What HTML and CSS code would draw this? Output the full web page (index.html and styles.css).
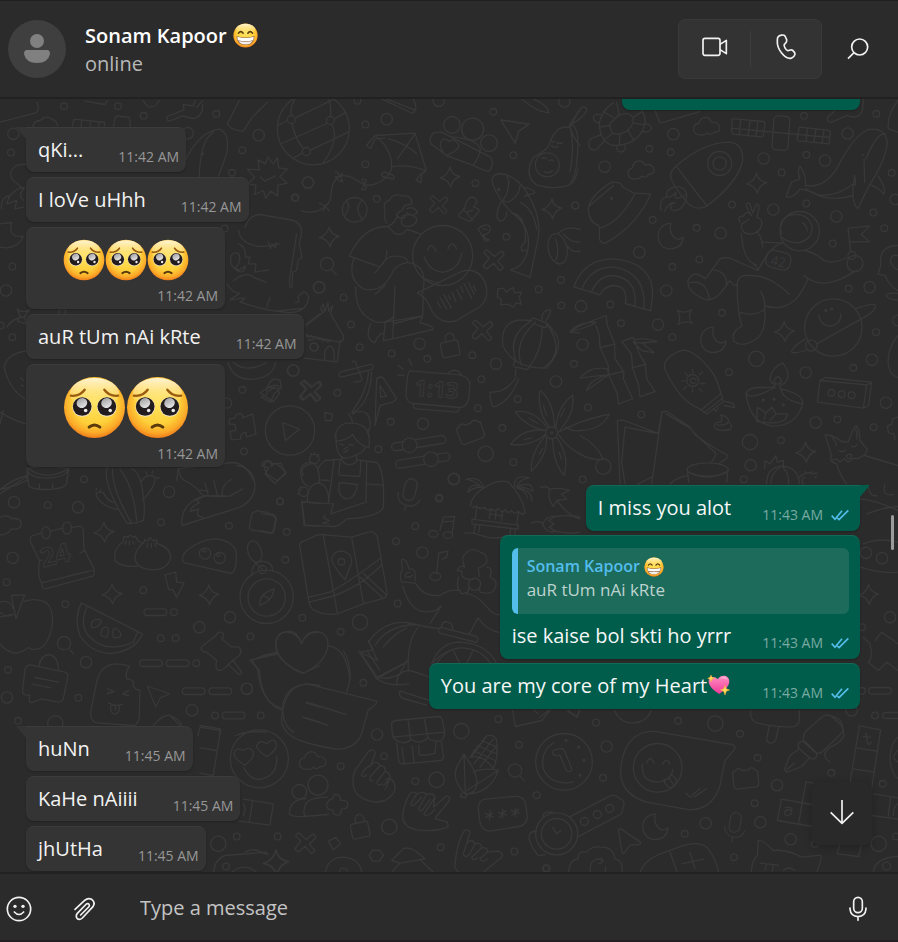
FILE: index.html
```html
<!DOCTYPE html>
<html lang="en">
<head>
<meta charset="utf-8">
<meta name="viewport" content="width=device-width, initial-scale=1">
<title>Sonam Kapoor</title>
<link rel="stylesheet" href="styles.css">
</head>
<body>
<svg class="defs" aria-hidden="true">
  <defs>
    <radialGradient id="face" cx=".5" cy=".42" r=".58">
      <stop offset="0" stop-color="#ffe35e"/><stop offset=".62" stop-color="#fdd03a"/><stop offset=".86" stop-color="#fba928"/><stop offset="1" stop-color="#ee7d1c"/>
    </radialGradient>
    <linearGradient id="shine" x1="0" y1="0" x2="0" y2="1">
      <stop offset="0" stop-color="#fff6dc" stop-opacity=".95"/><stop offset="1" stop-color="#ffe680" stop-opacity="0"/>
    </linearGradient>
    <linearGradient id="glint" x1="0" y1="0" x2="0" y2="1">
      <stop offset="0" stop-color="#a5a4a8"/><stop offset="1" stop-color="#e4e4e4"/>
    </linearGradient>
    <linearGradient id="pink" x1="0" y1="0" x2="0" y2="1">
      <stop offset="0" stop-color="#ff8fc0"/><stop offset="1" stop-color="#f0389a"/>
    </linearGradient>
    <symbol id="pleading" viewBox="0 0 64 64">
      <circle cx="32" cy="32" r="31" fill="url(#face)"/>
      <ellipse cx="32" cy="18" rx="25" ry="16" fill="url(#shine)"/>
      <path d="M8 20q9 1 14-6M42 14q5 7 14 6" fill="none" stroke="#9a5a10" stroke-width="2.4" stroke-linecap="round"/>
      <circle cx="19.500" cy="31.500" r="10" fill="#f3e6d0"/><circle cx="44.500" cy="31.500" r="10" fill="#f3e6d0"/>
      <circle cx="19.500" cy="31" r="9.500" fill="#231c1e"/><circle cx="44.500" cy="31" r="9.500" fill="#231c1e"/>
      <ellipse cx="19" cy="27.500" rx="5.500" ry="5" fill="url(#glint)" transform="rotate(-25 19 27)"/>
      <ellipse cx="44" cy="27.500" rx="5.500" ry="5" fill="url(#glint)" transform="rotate(-25 44 27)"/>
      <circle cx="23" cy="35" r="1.800" fill="#eee"/><circle cx="48" cy="35" r="1.800" fill="#eee"/>
      <path d="M26.500 52q5.500-4.500 11 0" fill="none" stroke="#5b3a0c" stroke-width="3" stroke-linecap="round"/>
    </symbol>
    <symbol id="grin" viewBox="0 0 64 64">
      <circle cx="32" cy="32" r="31" fill="url(#face)"/>
      <ellipse cx="32" cy="16" rx="25" ry="14" fill="url(#shine)"/>
      <path d="M14 26q6-8 12 0M38 26q6-8 12 0" fill="none" stroke="#5b3a10" stroke-width="4" stroke-linecap="round"/>
      <path d="M9 33q23 8 46 0q0 23-23 23t-23-23z" fill="#8c5a35"/>
      <path d="M11 35q21 7 42 0l-1 9q-20 5-40 0z" fill="#fff"/>
      <path d="M14 46q18 4 36 0q-5 9-18 9t-18-9z" fill="#f2efee"/>
    </symbol>
    <symbol id="heart" viewBox="0 0 72 66">
      <path d="M37 60C22 51 4 37 5 20C6 8 23 4 32 16C42-1 67 4 67 22C67 39 49 52 37 60z" fill="url(#pink)"/>
      <path d="M38 14q9-9 19-4q4 3 5 8q-10-8-24-4z" fill="#ffb7d5" opacity=".8"/>
      <path d="M12 3l3 7 7 3-7 3-3 8-3-8-7-3 7-3zM54 34l4 10 10 4-10 4-4 11-4-11-10-4 10-4z" fill="#ffdc5a" stroke="#f5a33b" stroke-width="1.500"/>
    </symbol>
    <symbol id="ticks" viewBox="0 0 54 36">
      <path d="M2 20l10 11L33 5M19 27l5 5L52 4M24 32l9-9" fill="none" stroke="#53bdeb" stroke-width="5"/>
    </symbol>
    <g id="star"><path d="M0-30Q4-6 30-2Q8 5 2 30Q-5 7-30 2Q-7-4 0-30z"/></g>
    <g id="cross"><path d="M-20-31Q-26-30-29-22L-13-6L-31 16Q-29 24-20 26L-1 9L18 31Q27 29 28 21L12 3L31-16Q31-25 22-27L3-11z"/></g>
    <g id="cloud"><path d="M-38 16Q-44-6-24-8Q-18-28-2-26Q10-26 14-12Q36-14 40 6Q38 20 22 18Q12 30 2 20Q-6 28-16 26Q-30 28-38 16z"/></g>
    <g id="moon"><path d="M0-38Q-8-4 18 10Q28 12 38 4Q34 38 0 39Q-34 38-38 2Q-36-34 0-38z"/></g>
    <g id="brick"><path d="M-38-12Q-39-22-30-23L-27-27Q-22-32-14-28L-10-24L8-26Q14-34 24-31L28-25Q36-26 37-18L40 14Q40 24 32 25L-24 32Q-33 32-34 24z"/></g>
    <g id="mic-doodle"><rect x="-18" y="-42" width="36" height="66" rx="18"/><path d="M-32 8Q-30 38 0 40Q30 40 36 14M0 40L-1 56"/></g>
    <g id="glass"><circle r="20"/><path d="M13 15L28 31"/></g>
    <g id="dart"><path d="M-30-30L36 12L2 18L-20 44z"/></g>
    <g id="dash"><rect x="-34" y="-10" width="68" height="20" rx="10"/></g>
    <g id="lock"><path d="M-26-14L18-24Q22-24 23-20L30 16Q30 20 26 21L-16 30Q-21 30-22 26L-29-8Q-30-13-26-14zM-12-18Q-20-40-4-44Q12-46 13-24"/></g>
  </defs>
</svg>

<header class="topbar">
  <svg class="avatar" viewBox="0 0 58 58" role="img" aria-label="Profile photo"><circle cx="29" cy="29" r="29" fill="#3f3f3f"/><circle cx="29" cy="21" r="7" fill="#808080"/><path d="M19 30h20q3 0 3 4q-2 9-13 9t-13-9q0-4 3-4z" fill="#808080"/></svg>
  <div class="contact">
    <h1 class="contact-name">Sonam Kapoor <svg class="name-emoji" role="img" aria-label="😁"><use href="#grin"/></svg></h1>
    <p class="contact-status">online</p>
  </div>
  <div class="calls">
    <button class="call" type="button" aria-label="Video call"><svg class="icon" width="28" height="28" viewBox="0 0 84 84"><rect x="6" y="16" width="51" height="51" rx="6"/><path d="M57 34L76 22V62L57 50"/></svg></button>
    <button class="call" type="button" aria-label="Voice call"><svg class="icon" width="28" height="28" viewBox="511 100 84 84"><path d="M529 112C533 106 546 104 550 109L555 120C557 127 553 129 548 134C545 138 553 152 558 153C563 154 566 148 573 152L579 159C582 165 577 173 567 176C550 178 525 150 527 122C527 117 527 115 529 112z"/></svg></button>
  </div>
  <button class="bare" type="button" aria-label="Search"><svg class="icon" width="28" height="28" viewBox="733 106 84 84"><circle cx="780" cy="142" r="24"/><path d="M763 159L745 177"/></svg></button>
</header>

<main class="chat">
  <svg class="wallpaper" viewBox="0 98 898 774" preserveAspectRatio="xMidYMid slice" aria-hidden="true">
    <!-- ball, kite, hug, lantern -->
    <g transform="translate(260 95) scale(.33333)">
      <circle cx="160" cy="100" r="108"/><circle cx="94" cy="72" r="12"/><circle cx="211" cy="75" r="12"/><circle cx="139" cy="168" r="12"/>
      <path d="M94 60Q90 35 105 10M106 67L220 12M211 63Q215 40 207 12M223 70L255 52M65 144L200 84M82 75L56 88M96 84Q105 130 131 160M215 87Q240 130 190 202M151 164L265 110M128 172L100 188"/>
      <path d="M345 120L465 113L498 222L486 235L482 262L468 254L480 238L498 226Q445 205 395 214Q396 160 345 120L319 150L332 159L345 130L374 128M465 115L412 190M386 130Q440 145 470 175M395 214Q395 230 381 242Q350 275 312 268Q260 230 236 244Q214 260 213 300Q210 325 192 336Q160 358 124 346"/>
      <path d="M374 229q-14 4-6 14q14 4 32 8q6-10-6-14q-12-2-20-8zM305 252q14-4 14 6q-8 12-14 24q12 4 14-6q-6-12-14-24zM226 228q12 4 22 30q-12 0-22-14q16-2 22-10M178 322q14 6 30 24M190 346q2-14 10-20"/>
      <path d="M365 10L458 54Q476 40 460 10M380 10L464 44M785 10Q830 50 866 52Q866 30 820 10"/>
      <circle cx="576" cy="88" r="25"/><circle cx="638" cy="101" r="33"/><circle cx="687" cy="143" r="25"/><path d="M560 180L520 150Q500 140 520 112L545 110L690 184Q704 200 690 224Q684 230 672 224L630 206Q600 195 558 180Q530 150 548 132Q560 128 567 138Q580 126 596 146Q600 164 558 180M575 124Q650 130 661 160Q656 190 640 208"/>
      <use href="#dart" transform="translate(766 90) rotate(-24) scale(1.100)"/>
      <path d="M930 96Q890 86 870 140Q868 160 820 186Q790 240 830 268Q880 285 930 268Q950 250 954 220M935 92Q945 60 960 45M928 90Q940 130 960 150"/><circle cx="862" cy="208" r="36"/><path d="M845 190q10-8 14 0M868 196q8-6 12 0M852 228q12 8 26-2M870 134q6 8 14 4M874 150q10 10 20 2M890 140q10 8 18 0"/>
      <circle cx="284" cy="343" r="37"/><path d="M260 316Q275 335 252 362M306 314Q280 340 308 372"/>
      <path d="M380 383Q368 360 376 350Q366 320 388 314Q400 290 430 302Q450 298 455 316Q458 330 438 328Q430 332 428 344Q412 350 410 360Q420 374 436 364M440 340Q462 330 472 350Q460 368 440 352M428 362Q450 350 470 368Q472 386 450 392Q430 396 424 382zM412 356Q410 380 384 393L402 412Q425 425 440 402Q470 410 482 416M384 393Q310 390 268 482L360 514Q378 485 400 482Q440 480 444 500M360 514L345 532M360 514Q384 490 380 466M282 487Q260 550 310 580Q370 595 400 525Q440 480 482 520Q500 545 486 600M287 575Q285 660 350 680Q380 685 402 662M346 596L375 570M405 573L398 730L518 702Q522 690 480 682L488 660L490 605M370 735L376 680L485 662M402 684L480 664M332 684Q312 730 345 742Q350 720 370 712M370 735L398 730"/>
      <circle cx="548" cy="480" r="90"/><path d="M502 465q12-30 26 2M564 460q12-30 26 0M492 484Q510 530 550 530Q600 520 605 472M492 550Q530 560 530 562"/>
      <path d="M472 592L600 530Q650 510 675 560Q695 620 640 645L590 675Q540 690 515 645Q500 610 490 605zM532 618l10 18M540 606l20 34M552 598l22 40M566 600l6 12M576 590l12 28M590 582l16 30M602 572l8 20M612 564l24 46M626 562l16 34M640 570l8 16"/>
      <path d="M596 364Q594 358 600 354L614 340Q616 318 630 306Q652 302 650 322L640 334Q660 340 657 348L630 378zM620 350l18-6M610 340l30 36"/>
      <path d="M654 400Q680 380 690 394Q696 412 668 420L680 432Q692 428 684 436L676 436zM668 400L680 402"/>
      <path d="M700 270Q688 238 720 234Q770 240 800 290Q850 370 832 440L810 545L752 524Q800 510 805 450Q810 390 756 352Q715 310 700 270M738 236Q754 260 738 300Q720 320 746 320Q780 300 780 270M788 275Q820 280 825 292Q800 300 794 302M722 320Q700 370 722 378Q740 370 740 350M756 352Q800 360 796 440Q780 450 786 466L800 464M780 320Q820 340 830 400"/><circle cx="716" cy="282" r="3"/>
      <ellipse cx="893" cy="460" rx="28" ry="46" transform="rotate(-12 893 460)"/><path d="M886 430Q900 460 888 494M896 412Q920 390 960 402M920 450Q940 475 960 466M910 415Q930 440 960 440"/>
      <path d="M138 690L190 650Q175 640 190 626L194 648L204 622L206 648L218 630L212 656L250 720Q254 736 240 740L140 720M240 736L232 800L134 788M194 794Q190 756 210 752Q226 756 222 796M140 716q6 16 14 4q6 12 14 4q6 12 14 4q6 12 14 4q6 12 14 4"/><circle cx="162" cy="754" r="12"/>
      <path d="M714 580L730 578L738 590L758 576L764 592L784 590L778 606L784 626L768 622L760 636L744 626L722 628L724 612L712 604z"/>
      <path d="M814 676Q720 660 728 750Q760 820 860 818Q910 760 890 720Q870 690 860 684M814 676Q740 720 768 798M826 680Q760 740 784 808M846 690Q850 760 806 818M860 684Q920 770 852 816M814 676Q812 668 822 668L858 682Q866 696 850 696L820 684M846 672Q846 640 872 644Q872 654 856 678M764 798Q756 806 764 814L800 822L808 816M768 846Q740 892 690 890Q690 920 700 935Q750 920 776 850M768 820L766 840M930 710L960 690M930 710L960 712"/>
      <use href="#star" x="570" y="245"/><use href="#star" x="208" y="424"/><use href="#star" x="876" y="340"/><use href="#cross" transform="translate(536 328) scale(.880)"/><use href="#cross" x="701" y="494"/><use href="#cross" x="667" y="705"/><use href="#glass" x="201" y="506"/><use href="#lock" x="570" y="757"/>
      <path d="M240 830L335 806Q345 814 335 822L245 845Q230 840 240 830zM276 800Q288 790 290 810L306 850Q306 860 282 860M326 830Q320 890 278 946Q272 960 282 950Q330 920 335 830M345 990L350 850Q360 840 370 848L410 910L398 920L360 930zM360 870L362 905L380 902z"/>
      <path d="M450 826L600 838Q630 845 630 870L626 910Q620 935 600 936L460 924Q435 920 438 890L442 850Q444 828 450 826zM565 832Q590 814 604 838M460 924Q456 936 470 940L590 950Q600 944 596 938M415 810L430 822M446 790L456 810M412 838L432 840"/>
      <circle cx="380" cy="71" r="17"/><circle cx="144" cy="261" r="17"/><circle cx="177" cy="576" r="17"/><circle cx="479" cy="745" r="17"/><circle cx="708" cy="805" r="17"/><circle cx="99" cy="825" r="17"/><circle cx="888" cy="858" r="17"/><circle cx="536" cy="16" r="17"/><circle cx="913" cy="18" r="17"/>
      <circle cx="316" cy="87" r="10"/><circle cx="316" cy="206" r="10"/><circle cx="105" cy="307" r="10"/><circle cx="350" cy="310" r="10"/><circle cx="646" cy="263" r="10"/><circle cx="700" cy="49" r="10"/><circle cx="760" cy="179" r="10"/><circle cx="739" cy="424" r="10"/><circle cx="251" cy="606" r="10"/><circle cx="273" cy="687" r="10"/><circle cx="299" cy="755" r="10"/><circle cx="395" cy="774" r="10"/><circle cx="502" cy="790" r="10"/><circle cx="637" cy="779" r="10"/><circle cx="836" cy="582" r="10"/><circle cx="903" cy="553" r="10"/><circle cx="904" cy="630" r="10"/><circle cx="664" cy="851" r="10"/><circle cx="942" cy="805" r="10"/><circle cx="292" cy="16" r="10"/><circle cx="946" cy="330" r="10"/>
    </g>
    <text class="doodle-text" x="414" y="395" font-size="22" transform="rotate(4 414 395)">1:13</text>
    <!-- upper left -->
    <g transform="translate(0 100) scale(.33333)">
      <path d="M0 65L105 38Q122 30 110 5M255 2L315 12L322 0M430 0Q452 40 478 0M98 82Q100 60 122 60Q134 42 156 56Q176 66 172 80M216 80L222 56L315 66L312 82M245 60L243 80M272 62L270 80M298 66L296 80M340 80L346 50Q352 44 362 48L386 50Q392 56 390 80"/>
      <path d="M502 48L552 28L550 12L580 16L586 0M590 20L608 0M508 62L548 46L578 54Q610 50 608 12M502 48Q498 60 508 62M682 70Q690 90 730 92L755 52L802 5M682 70L718 0"/>
      <path d="M556 180Q600 90 660 86Q690 100 680 160L655 228M598 228Q600 120 640 95"/><circle cx="608" cy="160" r="2"/>
      <path d="M742 206L778 208L774 178L796 190L804 170L820 190L832 172L836 202L862 206L840 228L862 248L834 254L832 286L812 272L798 294L790 270L764 282L768 254L744 250L764 230zM782 230L794 242L826 226"/>
      <path d="M735 380Q745 345 780 342L880 360Q908 370 904 400L898 430L906 470L894 480L890 510L878 515L876 560Q868 570 868 540L890 400M716 390Q720 430 780 438Q815 436 838 430M804 424l8 20l4-14M816 430l10 12l2-16M692 470Q700 450 716 460Q726 480 708 500L715 510L736 496Q730 530 700 500Q690 490 692 470M716 430Q740 440 736 470L750 470L745 490L768 490L765 515L806 508M700 540Q740 510 760 530L798 545M680 550Q700 580 720 578L690 598L735 592M800 620L810 590M735 592Q730 600 720 604Q790 630 860 636Q920 640 926 590Q916 560 894 590Q900 610 886 605M830 632L905 624"/>
      <path d="M26 290Q50 260 74 262Q50 285 72 300M5 325Q0 290 30 285L20 310L50 300L45 325L70 320M0 370L36 366Q20 410 70 408Q50 450 0 440M76 192Q40 190 32 215Q30 230 40 240L66 262M52 626Q70 640 88 628L72 650L80 670L52 662L60 645zM20 680Q40 650 78 648M78 752Q20 760 12 800Q30 870 75 895M0 935Q40 960 78 970M10 930L0 970M70 840l-8-8M72 856l-8-2M920 670L960 640M684 786Q700 840 760 836Q820 830 826 786M700 786Q740 820 800 786M918 706l24 4M924 720l20-4"/>
      <circle cx="870" cy="990" r="74"/><path d="M848 966L898 986L856 1020z"/><path d="M690 955L705 952Q708 936 725 940L728 952L758 940L768 1000L740 1010L738 996Q720 996 722 1016L695 1018L690 992L708 990L706 972L686 970z"/>
      <path d="M784 890L800 882Q800 850 820 836L840 838L844 862L822 880L812 905zM800 860l30 4M806 872l16-12M790 1095L802 1080Q812 1078 818 1090L842 1088L858 1120L830 1140L800 1120z"/>
      <path d="M82 1105Q140 1090 206 1105L200 1140M82 1105L80 1140M90 1108Q140 1140 200 1108M0 1180L80 1128M530 1140L535 1105Q600 1095 700 1086Q740 1090 760 1140"/>
      <use href="#cross" x="934" y="870"/>
      <circle cx="776" cy="104" r="17"/><circle cx="563" cy="98" r="17"/><circle cx="924" cy="246" r="17"/><circle cx="40" cy="100" r="17"/><circle cx="18" cy="570" r="17"/><circle cx="880" cy="810" r="17"/><circle cx="942" cy="740" r="12"/><circle cx="958" cy="560" r="17"/><circle cx="680" cy="908" r="15"/>
      <circle cx="192" cy="17" r="10"/><circle cx="354" cy="17" r="10"/><circle cx="431" cy="46" r="10"/><circle cx="649" cy="40" r="10"/><circle cx="727" cy="149" r="10"/><circle cx="696" cy="217" r="10"/><circle cx="886" cy="291" r="10"/><circle cx="33" cy="156" r="10"/><circle cx="37" cy="498" r="10"/><circle cx="37" cy="710" r="10"/><circle cx="727" cy="868" r="10"/><circle cx="732" cy="1053" r="10"/><circle cx="674" cy="384" r="10"/><circle cx="2" cy="675" r="10"/><circle cx="187" cy="634" r="10"/>
    </g>
    <!-- upper right: turtle, rocket, whale, astronaut, planet -->
    <g transform="translate(570 95) scale(.33333)">
      <path d="M120 85L145 60Q180 45 190 70Q190 95 165 110Q120 130 120 85M88 80Q100 40 130 22M88 80Q88 140 130 150Q190 150 215 110Q235 70 215 45M88 95L118 90M104 132L130 112M148 150L150 118M190 132L175 106M222 88L190 82M214 50L190 65M148 60L140 22M100 48L130 66M92 58Q70 50 70 70Q75 82 88 82M62 130L92 118M62 130Q50 145 62 160Q78 170 90 150L104 136M140 152Q138 168 154 170Q168 166 165 150M220 88Q240 80 245 98Q240 112 215 108M0 90Q50 60 50 40Q40 25 25 48L0 85Q30 90 22 180Q20 240 0 265M2 100Q14 160 0 230"/>
      <path d="M255 45L268 78Q270 85 282 80L390 48M772 66L795 45L800 12M772 66Q770 82 785 80L830 60Q870 75 878 40L880 12M984 15Q950 60 955 100L984 110"/>
      <g><path d="M318 212Q400 140 480 140Q520 145 518 195Q505 260 410 332Q370 350 345 312Q300 260 302 235Q305 222 318 212L410 330"/><circle cx="449" cy="204" r="36"/><circle cx="449" cy="204" r="20"/><path d="M274 345Q265 310 290 305Q285 285 310 275Q340 270 348 290Q355 310 335 336Q320 350 302 342L304 325L315 322Q298 318 284 346M290 305Q305 306 318 290Q310 310 325 308L345 300"/></g>
      <path d="M486 72Q488 68 496 70L580 78Q586 80 585 86L580 120Q578 125 572 124L490 116Q484 114 485 106zM484 98L780 126M512 72L508 118M540 74L534 122M564 76L558 122M688 95L775 104Q782 106 781 112L777 145L686 136Q680 134 682 126zM712 98L708 138M738 100L732 140M762 104L756 144"/><rect x="609" y="62" width="48" height="102" rx="12" transform="rotate(4 633 112)"/>
      <path d="M648 304L665 260L690 250Q680 230 690 212Q710 240 706 270Q760 280 800 220Q850 120 895 102Q945 95 952 140Q950 180 915 242Q890 280 864 340Q840 320 854 240Q860 280 850 265Q810 300 750 300Q720 285 690 280Q670 310 648 304M705 278Q770 325 850 300M888 190Q920 110 946 115M882 190L884 260M925 242Q950 280 942 296Q930 280 902 268M876 178h6"/>
      <path d="M55 340Q60 300 125 260L150 262L160 276L190 292L242 296Q200 390 108 442Q92 445 88 430Q90 400 86 390Q55 380 55 340zM60 330L130 270M90 398Q150 380 195 294"/><circle cx="125" cy="309" r="3"/>
      <path d="M12 574Q40 490 130 490Q250 500 248 600L242 646L166 624Q175 570 128 570Q100 575 90 598L12 574M36 580Q60 515 130 514Q230 530 222 640M64 590Q85 540 130 540Q205 550 194 632"/>
      <path d="M510 380Q500 360 520 362Q532 340 544 360L528 330Q530 318 540 325L548 352L560 325Q570 325 566 345L560 365Q580 370 574 390Q570 410 545 416Q510 415 515 385Q535 375 536 370M514 414Q520 500 560 508M562 410Q578 430 578 455M574 440L640 442"/>
      <circle cx="689" cy="407" r="59"/><path d="M635 415Q620 370 665 358Q710 350 726 390Q730 430 685 442Q650 440 635 425M698 382Q710 390 712 406M638 442Q600 450 564 525L480 488Q460 485 450 490L406 550Q370 520 354 555Q350 590 405 612Q440 620 475 560L480 556L490 568L502 570M430 524Q470 525 470 570M358 562Q410 550 418 612M564 525Q560 510 550 508M502 570Q500 535 545 540Q600 540 658 596M502 570Q500 640 516 692Q480 710 492 738Q520 760 565 725Q590 700 584 635Q585 605 570 586M508 650Q550 665 584 642M584 630Q670 660 714 550M702 540Q760 590 850 530M705 465Q740 475 755 490Q780 510 832 486"/>
      <rect x="588" y="468" width="74" height="52" rx="20" transform="rotate(14 625 494)"/><circle cx="855" cy="504" r="24"/><circle cx="846" cy="480" r="12"/><path d="M842 470L834 398L898 392L874 416L898 438L838 440"/>
      <path d="M984 450Q925 450 932 510L924 536L945 540Q960 575 984 585M984 480Q960 475 962 500Q970 520 984 522M984 594Q950 590 948 600Q955 612 984 614"/>
      <circle cx="790" cy="696" r="86"/><circle cx="724" cy="750" r="17"/><path d="M740 745L878 668Q920 645 916 628Q905 622 856 640M706 730Q665 755 664 770Q680 776 712 762M746 660Q752 690 780 692Q815 685 812 655"/><circle cx="768" cy="645" r="3"/><circle cx="785" cy="640" r="3"/>
      <path d="M0 710Q20 680 78 680Q70 690 0 710M18 695L108 660L112 690L134 745L135 790L162 830L160 850L188 910L145 925L142 895L116 838L115 810L90 756L88 720L78 690M92 756L134 746M116 838L160 828M30 848Q60 810 112 820L116 838Q80 840 30 848M50 885Q60 850 116 838M50 885L116 838M155 738L190 726L208 775L226 806L230 850L255 888L210 904L206 870L188 818L184 775zM186 818L228 806M190 740Q200 720 260 738Q210 745 190 740L215 765L252 772L215 742"/>
      <path d="M284 802Q300 775 338 764Q380 765 430 835Q440 850 455 900L460 918L410 956L390 940Q330 920 284 820zM392 945L450 896M402 952L456 910M430 940L438 948L446 936M460 916L490 924L494 936L462 930"/><circle cx="368" cy="855" r="18"/><path d="M375 862q-14 4-14-8q8-12 18 0M368 822v10M368 880v10M334 856h10M392 864h12M346 832l6 8M388 880l8 8M388 838l10-8M348 874l-8 8"/>
      <path d="M452 958Q480 965 475 978Q490 990 480 1002Q440 1010 432 992Q435 978 450 980Q460 970 452 958M440 988Q465 992 475 980"/>
      <path d="M528 895Q530 880 560 876L608 876L616 868Q595 860 602 840Q610 815 638 802Q660 830 652 850Q645 868 630 870L632 880Q700 895 698 925Q680 990 610 992Q540 985 528 895Q540 915 616 876M632 880Q640 915 698 925M624 842Q600 860 624 866Q645 860 624 842M560 978L562 935L588 952L606 935L618 955L652 955Q650 985 600 982zM588 952L582 972M618 955L600 975"/><circle cx="580" cy="914" r="3"/><circle cx="612" cy="911" r="3"/><circle cx="640" cy="928" r="3"/>
      <path d="M750 855L890 868L904 862L896 930L880 938L742 920zM750 855L766 846L904 860M890 868L880 938"/><circle cx="784" cy="892" r="10"/><circle cx="815" cy="896" r="10"/><circle cx="845" cy="899" r="10"/>
      <path d="M984 720Q950 760 955 810Q960 840 984 846M984 965L968 970L966 985L952 992L956 1012L972 1015L975 1032"/>
      <path d="M142 975L160 974L264 1014L276 948L290 948L360 995L378 1020Q450 1070 472 1078Q480 1085 445 1105M276 948L245 1165M150 1165L142 975M165 995L264 1014M165 995L155 1100L165 1165M288 955L360 998M370 1010L436 1072Q440 1080 425 1098M205 1165L245 1145"/>
      <ellipse cx="413" cy="1122" rx="62" ry="20"/><path d="M352 1122L356 1160M474 1122L470 1160M358 1130Q410 1160 468 1130M300 1165Q320 1145 355 1140"/>
      <path d="M800 1105Q775 1100 785 1080L765 1018Q785 1015 815 1038L835 1040Q850 995 858 990Q870 1005 870 1035L892 1062L884 1080L984 1110M784 1095L800 1090L810 1100L822 1090L835 1100L850 1088L862 1090L884 1078M800 1105Q810 1140 830 1165M808 1065q10 8 20-2M845 1052q10 6 16-6M828 1082q10-10 18-2q-4 14-14 8zM786 1025Q800 1040 798 1050M856 1000Q864 1015 860 1030"/>
      <path d="M590 1165Q590 1115 636 1112Q685 1115 688 1165M602 1165Q605 1130 630 1116M640 1116Q660 1140 655 1165M584 1118L585 1095L600 1105L618 1080L622 1100L640 1095L640 1110M688 1145Q710 1125 730 1135L740 1132M708 1135L706 1128M722 1135L724 1128M735 1145L740 1142M700 1165Q690 1150 705 1145"/>
      <use href="#cloud" x="410" y="92"/><use href="#cloud" transform="translate(212 222) rotate(-8)"/><use href="#moon" x="302" y="421"/><use href="#moon" x="430" y="732"/><use href="#star" x="560" y="263"/><use href="#star" x="643" y="708"/><use href="#star" x="707" y="1070"/><use href="#star" transform="translate(344 664) rotate(45)"/>
      <circle cx="310" cy="116" r="17"/><circle cx="104" cy="214" r="17"/><circle cx="581" cy="189" r="17"/><circle cx="833" cy="114" r="17"/><circle cx="765" cy="195" r="17"/><circle cx="610" cy="342" r="17"/><circle cx="799" cy="363" r="17"/><circle cx="208" cy="470" r="17"/><circle cx="452" cy="413" r="17"/><circle cx="289" cy="585" r="17"/><circle cx="33" cy="632" r="17"/><circle cx="264" cy="688" r="17"/><circle cx="38" cy="747" r="17"/><circle cx="559" cy="790" r="23"/><circle cx="707" cy="831" r="17"/><circle cx="906" cy="793" r="17"/><circle cx="899" cy="575" r="17"/><circle cx="948" cy="922" r="17"/><circle cx="737" cy="981" r="17"/><circle cx="540" cy="1040" r="23"/><circle cx="100" cy="1113" r="23"/><circle cx="542" cy="1109" r="17"/><circle cx="976" cy="312" r="16"/><circle cx="984" cy="675" r="16"/>
      <circle cx="238" cy="160" r="10"/><circle cx="302" cy="170" r="10"/><circle cx="248" cy="373" r="10"/><circle cx="380" cy="397" r="10"/><circle cx="486" cy="327" r="10"/><circle cx="388" cy="492" r="10"/><circle cx="307" cy="514" r="10"/><circle cx="121" cy="627" r="10"/><circle cx="153" cy="683" r="10"/><circle cx="307" cy="725" r="10"/><circle cx="456" cy="652" r="10"/><circle cx="635" cy="231" r="10"/><circle cx="709" cy="178" r="10"/><circle cx="709" cy="324" r="10"/><circle cx="910" cy="351" r="10"/><circle cx="943" cy="398" r="10"/><circle cx="965" cy="232" r="10"/><circle cx="919" cy="55" r="10"/><circle cx="702" cy="61" r="10"/><circle cx="788" cy="444" r="10"/><circle cx="836" cy="579" r="10"/><circle cx="918" cy="710" r="10"/><circle cx="850" cy="817" r="10"/><circle cx="477" cy="830" r="10"/><circle cx="54" cy="936" r="10"/><circle cx="214" cy="957" r="10"/><circle cx="802" cy="972" r="10"/><circle cx="911" cy="995" r="10"/><circle cx="633" cy="1034" r="10"/><circle cx="521" cy="1152" r="10"/><circle cx="38" cy="1152" r="10"/><circle cx="16" cy="330" r="10"/>
    </g>
    <text class="doodle-text doodle-text--thin" x="770" y="264" font-size="13" transform="rotate(12 770 264)">42</text>
    <!-- centre: flower, gardener, map, hut -->
    <g transform="translate(260 380) scale(.33333)">
      <circle cx="875" cy="157" r="18"/><circle cx="875" cy="157" r="3"/>
      <path d="M868 140Q830 90 840 30Q880 60 884 138M888 144Q890 80 938 44Q945 100 900 148M858 150Q800 140 765 94Q820 85 862 142M856 162Q810 200 752 192Q790 140 858 150M860 172Q860 230 814 272Q810 220 856 166M878 176Q880 250 912 284Q930 230 890 170M894 155L960 125M896 162Q920 200 960 220M917 140Q940 155 960 150M850 75l10 30M914 84l-12 24M808 114l24 14M792 178l22-6M838 222l10-18M904 236l-6-22M960 125Q1020 105 1048 102Q1020 150 960 150M960 165Q1010 190 1030 236Q990 240 960 220"/>
      <path d="M225 170Q230 125 275 128Q325 130 326 170M228 160Q225 240 265 232Q310 220 316 200M228 182Q260 180 278 162Q290 190 326 202Q332 170 322 150M264 98Q275 110 278 128M278 100Q300 85 322 100Q340 130 322 158M238 190l14 4M266 192l14 2M250 214q10 2 14-6M252 206L262 200M247 230L246 240Q265 265 290 242L290 225M246 236L196 240Q180 250 176 262M222 236L206 365M240 240L236 284L300 288L302 240M292 238L350 246Q375 270 370 380Q360 410 260 415Q235 440 220 438L132 434L126 365L220 370L212 400L318 365L320 245M238 306Q230 350 262 356Q290 350 292 312zM320 310L372 314M176 298L208 300M196 403L190 412L208 420L188 428L206 430M142 365Q140 308 180 308Q210 320 205 368M178 306Q180 250 150 245Q118 250 122 280Q125 310 146 318"/><circle cx="163" cy="235" r="14"/><circle cx="131" cy="334" r="14"/><path d="M152 218l4 8M164 216v6M176 222l-6 6M120 318l4 6M114 326l8 4M112 340h6"/>
      <rect x="394" y="176" width="164" height="24" rx="12" transform="rotate(-9 476 188)"/><rect x="406" y="228" width="164" height="24" rx="12" transform="rotate(-9 488 240)"/><circle class="solid" cx="449" cy="194" r="22"/><circle class="solid" cx="513" cy="236" r="22"/>
      <path d="M120 500Q115 485 135 480L170 464Q190 460 200 464L275 470L325 455Q345 450 352 470L380 630Q384 652 365 655L310 670L232 700Q190 705 165 690Q150 685 146 660zM190 464L232 698M275 470L310 668M146 650L210 635Q260 610 360 535M150 664L215 648Q300 620 366 552M300 590L368 652M310 578L378 642M255 598Q210 545 216 535Q220 510 248 512Q280 520 274 550zM194 98Q196 94 204 98L218 102L214 120L196 120z"/><circle cx="244" cy="544" r="10"/>
      <path d="M630 374Q640 340 672 322Q710 295 745 304Q790 350 795 398Q785 405 775 392Q765 405 755 390Q745 402 735 388Q725 400 715 384Q700 398 695 384Q680 394 675 380Q660 390 650 376Q640 386 630 374M650 380L646 416M776 396L770 432M636 416L775 434L774 446L636 430zM646 430L642 456M660 432L656 456M752 446L750 462M766 446L764 462M692 386L688 414M728 392L724 420M690 400L726 406M708 390L706 416M612 458Q640 455 660 464Q700 480 740 466M672 322Q660 285 618 296Q645 300 665 320M672 322Q630 300 624 336Q645 315 672 322M764 318Q760 280 808 292Q780 295 770 318M770 318Q820 300 818 332Q790 315 770 322Q800 330 802 352M770 322Q815 325 816 362"/>
      <path d="M540 450L550 410L584 408L576 460M548 424L582 422M536 520L542 516L564 512L560 530L546 536M530 580L536 518"/><ellipse cx="520" cy="460" rx="14" ry="10"/><ellipse cx="564" cy="464" rx="14" ry="10"/><ellipse cx="526" cy="588" rx="16" ry="12"/>
      <path d="M424 540Q428 530 440 545L448 566Q470 560 465 600M424 540L428 565Q415 590 425 604L466 608Q490 650 540 645Q570 625 600 630M428 616Q450 695 500 694Q530 694 538 680M450 575q-20 4-14 14q18 2 22-6M544 676L510 730M620 640Q650 640 690 690Q700 700 720 704M640 596Q600 600 606 572L592 570Q600 550 614 560Q600 530 620 515Q640 500 660 515Q685 520 680 545Q670 560 655 562L658 588M680 560Q700 560 690 590Q715 600 706 620Q700 645 660 635L658 625M596 590Q585 620 605 640L622 636L628 620"/><circle cx="644" cy="611" r="18"/>
      <path d="M842 322Q855 312 870 326Q900 320 928 330L905 340L920 356L890 360L880 378Q860 350 870 326M890 360Q930 410 960 415M815 428Q830 418 848 428M848 430Q860 405 884 408L866 420L882 430L868 440L886 452Q860 462 848 430M884 408Q930 402 960 410M886 452Q930 462 960 455"/>
      <path d="M48 800Q45 755 90 752Q115 755 124 790Q140 745 180 755Q210 765 202 805Q190 850 130 878Q60 850 48 800M203 796Q260 800 270 900M0 830L50 818M298 815L340 808L325 780L352 840L300 815L352 890Q380 900 420 880L440 840M325 785Q370 720 440 726Q500 740 540 745M345 795Q380 735 470 732M370 800Q400 760 440 742M445 870Q440 780 475 740M352 890L445 842M540 740L650 768Q656 776 650 786L540 758Q530 748 540 740M545 742Q545 722 562 724Q580 728 578 748M628 760L654 712Q680 750 718 756M515 850Q540 785 600 785Q680 790 708 846M530 850Q560 800 610 802Q660 805 690 846M580 810L600 850M640 808L620 850"/>
      <path d="M5 255Q10 238 22 242Q40 250 34 258L48 248L78 275L45 310L15 280L26 262zM0 392L22 396L28 404Q45 402 48 410L40 450Q38 458 28 456L0 450"/>
      <use href="#brick" transform="translate(631 155) rotate(-14)"/><use href="#mic-doodle" transform="translate(448 336) rotate(14)"/><use href="#cross" x="150" y="32"/><path d="M0 36L30 18L50 14Q64 20 52 32L60 36L40 64z"/>
      <circle cx="489" cy="130" r="17"/><circle cx="677" cy="220" r="23"/><circle cx="581" cy="296" r="17"/><circle cx="487" cy="516" r="17"/><circle cx="300" cy="725" r="23"/>
      <circle cx="392" cy="124" r="10"/><circle cx="355" cy="206" r="10"/><circle cx="232" cy="37" r="10"/><circle cx="654" cy="83" r="10"/><circle cx="773" cy="56" r="10"/><circle cx="727" cy="142" r="10"/><circle cx="760" cy="245" r="10"/><circle cx="60" cy="363" r="10"/><circle cx="80" cy="454" r="10"/><circle cx="538" cy="352" r="10"/><circle cx="466" cy="437" r="10"/><circle cx="408" cy="482" r="10"/><circle cx="413" cy="669" r="10"/><circle cx="127" cy="712" r="10"/><circle cx="242" cy="754" r="10"/>
    </g>
    <!-- lower left: cactus, calendar, taco, compass, melon -->
    <g transform="translate(0 465) scale(.33333)">
      <path d="M82 10Q80 35 140 38Q200 35 206 10M82 10L86 60Q90 70 130 72Q190 72 200 55L206 10M118 70V55M158 70V55M0 72Q40 65 82 44M0 72Q40 40 82 30"/>
      <path d="M320 12Q310 60 380 172Q395 178 430 165Q438 130 425 60Q415 15 395 10M338 12Q335 70 394 172M360 12Q400 60 410 165M352 132Q300 120 288 88Q290 75 310 82Q325 110 342 110M422 50Q440 20 465 35Q470 60 428 104M288 76l2-8M302 80v-8M440 26l-2-8M456 24l2-8M470 38l8-2M320 10l4-6"/>
      <path d="M535 10Q540 40 555 45Q590 65 600 80L610 90Q650 95 690 92Q710 80 728 70M615 52L624 88M642 46L652 90M668 92Q660 60 695 42M600 74L625 76M546 180Q540 120 600 95Q640 88 690 92M546 180L720 125Q770 100 764 50Q755 5 710 0M606 96L588 104L598 112Q570 125 572 138L596 130Q585 155 610 155"/>
      <path d="M94 212L125 202M152 197L188 188M214 186L240 182Q250 184 250 200L252 250L282 310Q284 328 278 332L136 370Q125 370 125 352Q115 340 116 310L118 285L92 230Q88 215 94 212M125 352L262 318Q280 315 282 312M118 285L128 284M240 262L252 256"/><ellipse cx="138" cy="202" rx="13" ry="18"/><ellipse cx="201" cy="188" rx="13" ry="18"/>
      <path d="M412 302Q360 305 345 285Q338 250 370 228L372 212L384 216L390 208L400 216L406 212L414 226L430 234M374 236l6-10M388 238v-12M402 236l-4-8M432 230L434 222L444 226L450 216L460 226L470 222L470 234Q510 245 512 275Q505 312 460 313Q410 310 405 280Q405 250 432 230M440 246l4-12M454 246v-12M468 244l-4-10"/>
      <path d="M548 285Q545 270 560 256Q600 220 650 220Q710 230 709 270Q710 315 695 324L555 292Q548 290 548 285"/><circle cx="615" cy="264" r="17"/><circle cx="659" cy="277" r="17"/><circle cx="613" cy="255" r="5"/><circle cx="655" cy="268" r="5"/>
      <path d="M495 328L527 320L530 350L552 352L530 396L520 374L506 372z"/>
      <circle cx="800" cy="394" r="80"/><circle cx="800" cy="396" r="56"/><circle cx="787" cy="312" r="12"/><ellipse cx="764" cy="258" rx="20" ry="33" transform="rotate(-18 764 258)"/><path d="M755 330Q755 290 787 287Q818 290 818 316M780 420Q775 385 822 370Q820 405 780 420M788 392Q800 390 808 402M764 290L787 312"/>
      <path d="M0 410Q30 400 40 430M34 390L74 388L48 460zM72 408Q110 395 140 412Q165 440 155 490Q140 545 115 550Q95 555 86 546Q60 565 40 562Q15 555 0 535M0 455L40 446M0 440Q20 460 40 446"/>
      <path d="M244 412L428 506Q400 560 330 564Q270 560 240 510Q220 460 244 412M262 422Q235 480 270 515Q320 565 400 530L412 500M275 485Q270 460 300 462Q310 468 295 480Q280 490 275 485M302 505Q305 485 320 484Q330 490 320 515Q305 515 302 505M340 515Q335 490 345 488Q365 498 362 512Q350 520 340 515"/>
      <path d="M75 612Q78 598 92 598L195 620Q206 625 203 635L190 700Q186 710 175 710L125 700L92 712Q85 705 90 690L75 688Q66 685 68 672zM118 600Q120 570 148 567Q176 575 175 612M104 636L176 650M98 656L152 667"/>
      <path d="M272 740L290 650Q300 600 345 595Q370 595 388 602Q375 620 380 640Q395 640 400 650Q395 670 420 675L418 740Q420 775 400 780L290 772Q270 765 272 740M322 670l20 8-20 6M386 674l-18 12 18 4M326 712Q345 725 368 716M332 722Q330 745 345 746Q360 744 358 722M346 722v12"/>
      <path d="M604 550Q602 542 612 538L648 510Q655 495 668 502Q676 510 665 520L695 545Q715 540 722 552Q725 560 718 570L690 592Q665 620 652 614Q645 605 650 585L620 560Q605 560 604 550M684 596L716 626Q726 628 724 618L698 584"/>
      <path d="M750 584L832 566M750 584L774 612Q780 710 848 730M848 730Q850 660 925 655L960 660M848 730Q848 780 880 800M918 712L960 725M908 755L960 770M830 560Q820 510 850 500Q890 495 905 533Q920 495 960 500M830 560Q850 600 908 624L960 600M460 780Q490 745 510 750Q545 765 544 780M510 750Q530 770 540 780M0 155Q25 145 35 160Q60 155 64 175Q60 195 35 190Q20 210 0 208M594 810L600 785L662 795L658 810M708 810Q740 795 800 800"/>
      <path d="M910 30L905 15Q920 -10 945 -5M905 108L915 180L960 182M905 108L960 114"/>
      <use href="#star" x="312" y="200"/><use href="#star" x="336" y="386"/><use href="#star" x="627" y="388"/><use href="#brick" transform="translate(788 170) rotate(17)"/><use href="#glass" x="192" y="533"/><use href="#dart" transform="translate(475 682) rotate(-14) scale(.900)"/>
      <use href="#dash" x="466" y="440"/><use href="#dash" x="453" y="593"/><use href="#dash" x="533" y="593"/><use href="#dash" x="581" y="677"/><use href="#dash" x="661" y="677"/><use href="#dash" x="701" y="750"/>
      <circle cx="42" cy="110" r="17"/><circle cx="234" cy="125" r="17"/><circle cx="38" cy="277" r="17"/><circle cx="507" cy="79" r="17"/><circle cx="598" cy="485" r="17"/><circle cx="690" cy="455" r="17"/><circle cx="258" cy="590" r="17"/><circle cx="741" cy="670" r="17"/><circle cx="576" cy="734" r="17"/><circle cx="21" cy="696" r="17"/><circle cx="166" cy="774" r="23"/>
      <circle cx="252" cy="41" r="10"/><circle cx="143" cy="119" r="10"/><circle cx="483" cy="170" r="10"/><circle cx="687" cy="181" r="10"/><circle cx="840" cy="107" r="10"/><circle cx="20" cy="350" r="10"/><circle cx="196" cy="416" r="10"/><circle cx="430" cy="374" r="10"/><circle cx="522" cy="440" r="10"/><circle cx="482" cy="518" r="10"/><circle cx="527" cy="518" r="10"/><circle cx="589" cy="593" r="10"/><circle cx="751" cy="513" r="10"/><circle cx="24" cy="613" r="10"/><circle cx="235" cy="697" r="10"/><circle cx="645" cy="750" r="10"/><circle cx="782" cy="750" r="10"/><circle cx="54" cy="766" r="10"/><circle cx="856" cy="283" r="10"/>
    </g>
    <text class="doodle-text" x="43" y="567" font-size="26" transform="rotate(-14 43 567)">24</text>
    <!-- bottom centre -->
    <g transform="translate(200 650) scale(.33333)">
      <circle cx="178" cy="325" r="87"/><path d="M134 344Q103 325 102 308Q108 288 130 300Q150 285 160 305Q162 325 134 344M200 318Q170 300 170 285Q180 265 200 280Q225 255 230 285Q225 305 200 318M132 352Q150 388 180 387Q235 375 230 318M0 225L62 235L40 375L0 368M0 292L50 300"/>
      <path d="M320 100L530 152Q534 160 505 178L490 230Q480 290 420 296Q380 295 300 270Q240 245 245 200Q255 105 320 100M320 155L438 192M308 200L382 224M130 446L220 460L210 524L118 512M158 450L148 515M130 460q10 10 0 36"/>
      <circle cx="298" cy="424" r="22"/><circle cx="354" cy="404" r="30"/><path d="M318 444Q270 445 268 490Q275 500 310 498L385 492M382 440Q330 440 318 460Q305 490 318 498M398 444Q400 430 410 432Q422 434 422 450Q442 448 444 462Q444 476 424 476Q424 494 412 494Q398 494 398 478Q382 480 380 466Q380 450 398 444"/>
      <path d="M575 220Q576 212 586 210L715 198Q724 198 726 206L734 245Q732 275 710 272Q690 270 684 262Q660 285 634 266Q615 285 590 270Q575 265 575 220M578 260L732 245M624 208L632 264M672 202L684 262M590 278L596 332Q600 342 612 340L722 330Q732 328 730 315L724 274M656 285L658 312Q680 318 705 308L708 276M606 290L612 338M636 286L642 336"/>
      <path d="M526 308Q520 290 505 304L465 360Q450 400 470 430Q510 465 555 450Q590 430 585 405Q575 375 558 388M526 308L512 345Q530 325 540 345Q556 345 556 362Q575 370 568 388L556 416M512 345Q495 350 485 372Q490 385 500 372M540 345L510 380Q508 390 518 392M556 362L530 395Q532 408 545 400M568 388L550 405"/>
      <path d="M792 310L820 355Q850 430 795 430Q755 390 770 350zM792 310L796 430M820 365Q850 350 895 360Q870 430 800 430M895 360L800 420M786 428L780 438L796 442L802 430M810 320Q830 290 850 270Q855 252 875 255Q895 260 890 290Q895 320 880 355M810 320Q850 310 880 355M820 300L885 330M832 285L890 310M845 270L892 290M840 350L890 285M822 340L880 265M815 318L856 262"/>
      <path d="M608 500Q610 460 630 430Q640 420 650 430Q670 420 680 432Q700 425 705 440L700 470L740 436Q752 440 748 450L705 504L742 515Q748 528 738 532Q700 545 650 538Q610 530 608 500M650 430L632 460Q636 470 644 462L665 440M680 432L655 475Q660 485 668 478L690 446M705 440L672 490Q680 504 705 476"/>
      <circle cx="1092" cy="334" r="85"/><path d="M1062 276Q1020 300 1030 355Q1045 395 1100 398L1120 394M1060 300Q1055 312 1068 316L1080 314L1098 358Q1108 370 1116 356L1092 298Q1085 290 1060 300"/><circle cx="1098" cy="270" r="3"/><circle cx="1136" cy="290" r="3"/><circle cx="1152" cy="330" r="3"/><circle cx="1140" cy="374" r="3"/>
      <path d="M855 446L950 437Q975 440 978 465L982 500Q980 525 955 528L870 542Q845 540 840 515L835 475Q835 450 855 446M856 488l24 12M870 480l-2 28M856 502l22-14M896 486l24 8M908 476v26M898 500l20-20M934 480l24 8M946 472v26M936 494l20-18"/>
      <circle cx="1070" cy="550" r="63"/><circle cx="1070" cy="550" r="46"/><path d="M1058 530L1070 550L1082 540M1028 500Q1030 480 1058 486M1010 540L992 546Q980 560 1000 595L1015 616L1035 612M1108 500L1230 436Q1240 432 1250 438L1266 448Q1274 454 1272 462L1264 490L1132 560"/><circle cx="1153" cy="513" r="12"/><circle cx="1192" cy="492" r="12"/><circle cx="1229" cy="474" r="12"/>
      <path d="M764 650Q770 580 790 545Q800 530 810 545L800 580Q815 560 825 580Q845 575 845 592Q865 590 862 605L895 602Q912 608 905 620L850 665M764 650L775 665M800 580L790 610Q795 625 808 612L825 580M845 592L815 620Q820 635 832 622M862 605L840 625Q848 640 862 625"/>
      <path d="M575 630L610 595Q625 588 645 600L675 625L600 638zM600 638L575 665M660 628L700 665M376 665Q385 620 430 620Q480 625 485 665M40 665Q45 625 75 615L200 605M135 605Q160 590 184 606L205 612M96 665Q130 635 170 665M508 615L518 598L540 600L550 615L538 632L518 632zM385 572L408 560L422 580L400 598zM938 180L946 228L1025 210L1050 180M1000 178L1015 190M1105 180L1130 200L1140 180M475 0L530 85Q570 110 625 100M500 0L540 60M530 85L620 35M590 100Q590 60 630 60L690 80M600 122L690 150M600 122Q595 138 610 144L680 164M690 60Q700 20 750 0M155 30L190 15L230 5M155 30L178 60Q185 160 245 178M430 0Q465 60 440 125"/>
      <use href="#cloud" x="338" y="330"/><use href="#lock" x="480" y="536"/><use href="#glass" x="945" y="360"/><use href="#cross" x="316" y="578"/><use href="#star" transform="translate(228 636) scale(1.250)"/>
      <circle cx="140" cy="115" r="17"/><circle cx="531" cy="252" r="17"/><circle cx="784" cy="242" r="23"/><circle cx="710" cy="388" r="23"/><circle cx="568" cy="529" r="23"/><circle cx="55" cy="580" r="23"/>
      <circle cx="490" cy="97" r="10"/><circle cx="422" cy="347" r="10"/><circle cx="552" cy="317" r="10"/><circle cx="646" cy="392" r="10"/><circle cx="895" cy="206" r="10"/><circle cx="957" cy="283" r="10"/><circle cx="1010" cy="434" r="10"/><circle cx="943" cy="603" r="10"/><circle cx="722" cy="590" r="10"/><circle cx="110" cy="558" r="10"/><circle cx="233" cy="558" r="10"/><circle cx="1040" cy="654" r="10"/><circle cx="78" cy="648" r="10"/><circle cx="430" cy="665" r="12"/>
    </g>
    <!-- bottom right -->
    <g transform="translate(540 700) scale(.33333)">
      <path d="M340 92L575 132Q590 136 582 148L555 180L540 255Q520 325 450 328L320 305Q240 280 242 210Q250 95 340 92M438 278L450 290L480 264M462 290L500 264"/><circle cx="353" cy="202" r="73"/><path d="M320 188q10-28 22 0M368 192q12-26 22 0M308 190Q300 240 350 245Q395 240 398 208M372 236Q375 258 392 262Q412 255 408 235L394 222M386 230l14 22"/>
      <path d="M632 30Q630 55 645 65Q670 75 750 80Q775 80 778 60V30M688 76L680 115Q680 128 694 128Q706 125 708 115L716 78M224 30Q240 68 280 68Q320 65 334 30M0 50L25 30M80 30L112 50L118 30"/>
      <path d="M790 110Q790 100 800 90L848 48Q860 40 872 46L900 70Q910 80 908 95L845 155Q835 162 825 155L792 125zM776 128Q785 118 798 125L830 158Q832 170 822 176Q812 178 778 145Q772 135 776 128M778 145L750 165L734 205Q735 215 745 214L785 198L808 172M740 208L762 188M870 46Q905 50 908 80L912 105Q905 125 868 142Q840 165 870 184"/>
      <path d="M958 76L1022 88L1008 178L994 270M958 76L930 248M950 142L1010 152M938 205L1000 214M820 248L798 244L776 368M724 296L712 360L818 378M724 296L815 312M900 430L892 460L956 468L965 430M1000 280L1074 292M996 345L1074 356M1052 290L1044 352M736 322q16-6 20 4l-4 16q-18 8-18-6q2-10 18-8M978 98l4 30q6 8 12-4M970 108l22 2M1060 345q0-30 14-34"/>
      <path d="M1074 110Q1050 130 1050 180Q1055 220 1074 235M1074 150Q1060 160 1062 175L1074 185"/>
      <path d="M235 388Q238 382 244 386L300 424Q304 430 298 432L270 434L252 458Q248 462 246 455zM86 516Q85 480 115 474Q110 450 140 455Q155 435 185 440Q220 440 225 475Q250 480 246 516M152 516Q145 480 175 475L190 480M176 490L188 485L184 472M196 500V516M300 516Q310 485 350 465L430 435Q480 420 505 445Q530 480 536 516M390 455L412 516M425 490L490 476M450 456L465 505"/>
      <path d="M634 516Q635 480 652 465L655 420Q665 415 700 450Q740 445 785 470L842 464Q848 470 830 516M662 488L715 494M680 490L675 510M700 494L696 516M730 510Q745 495 765 510M1000 516Q1005 470 1074 468"/><circle cx="1040" cy="497" r="12"/>
      <use href="#brick" x="616" y="234"/><use href="#moon" x="346" y="378"/><use href="#mic-doodle" transform="translate(584 374) rotate(10) scale(.900)"/>
      <rect x="1028" y="36" width="70" height="18" rx="9"/>
      <circle cx="526" cy="69" r="23"/><circle cx="200" cy="138" r="17"/><circle cx="711" cy="254" r="17"/><circle cx="497" cy="368" r="17"/><circle cx="661" cy="365" r="17"/><circle cx="752" cy="416" r="17"/><circle cx="1016" cy="430" r="23"/><circle cx="935" cy="30" r="17"/>
      <circle cx="168" cy="66" r="10"/><circle cx="414" cy="61" r="10"/><circle cx="600" cy="100" r="10"/><circle cx="653" cy="172" r="10"/><circle cx="189" cy="232" r="10"/><circle cx="644" cy="308" r="10"/><circle cx="434" cy="400" r="10"/><circle cx="582" cy="470" r="10"/><circle cx="874" cy="217" r="10"/><circle cx="1028" cy="250" r="10"/><circle cx="1005" cy="45" r="10"/><circle cx="825" cy="430" r="10"/><circle cx="1068" cy="408" r="10"/><circle cx="18" cy="503" r="10"/>
    </g>
    <!-- right edge beside the sent messages -->
    <g transform="translate(420 470) scale(.33333)">
      <path d="M1330 220Q1380 200 1434 215M1322 290Q1380 310 1434 305M1340 130Q1390 110 1434 108M1320 85Q1370 90 1434 120M1345 50Q1350 80 1370 75M1395 40Q1385 80 1420 72M1330 500L1350 520Q1360 560 1345 575L1375 600L1400 575L1434 600M1365 510L1385 485L1434 520"/><circle cx="1338" cy="247" r="17"/><circle cx="1386" cy="263" r="17"/><circle cx="1410" cy="440" r="17"/><use href="#star" x="1346" y="372"/><circle cx="1326" cy="470" r="10"/><circle cx="1326" cy="661" r="10"/><use href="#dash" x="1380" y="661"/><circle cx="102" cy="25" r="17"/><circle cx="57" cy="84" r="10"/>
    </g>
  </svg>

  <ol class="messages">
    <li class="bubble bubble--out bubble--cut"></li>
    <li class="bubble bubble--in bubble--first"><span class="text">qKi...</span><time class="time">11:42 AM</time></li>
    <li class="bubble bubble--in"><span class="text">I loVe uHhh</span><time class="time">11:42 AM</time></li>
    <li class="bubble bubble--in bubble--emoji">
      <span class="emojis"><svg class="emoji-md" role="img" aria-label="🥺"><use href="#pleading"/></svg><svg class="emoji-md" role="img" aria-label="🥺"><use href="#pleading"/></svg><svg class="emoji-md" role="img" aria-label="🥺"><use href="#pleading"/></svg></span>
      <time class="time">11:42 AM</time>
    </li>
    <li class="bubble bubble--in"><span class="text">auR tUm nAi kRte</span><time class="time">11:42 AM</time></li>
    <li class="bubble bubble--in bubble--emoji">
      <span class="emojis"><svg class="emoji-lg" role="img" aria-label="🥺"><use href="#pleading"/></svg><svg class="emoji-lg" role="img" aria-label="🥺"><use href="#pleading"/></svg></span>
      <time class="time">11:42 AM</time>
    </li>
    <li class="bubble bubble--out bubble--first"><span class="text">I miss you alot</span><time class="time">11:43 AM</time><svg class="ticks" role="img" aria-label="Read"><use href="#ticks"/></svg></li>
    <li class="bubble bubble--out bubble--reply">
      <blockquote class="quote"><p class="quote-name">Sonam Kapoor <svg class="quote-emoji" role="img" aria-label="😁"><use href="#grin"/></svg></p><p class="quote-text">auR tUm nAi kRte</p></blockquote>
      <div class="line"><span class="text">ise kaise bol skti ho yrrr</span><time class="time">11:43 AM</time><svg class="ticks" role="img" aria-label="Read"><use href="#ticks"/></svg></div>
    </li>
    <li class="bubble bubble--out"><span class="text">You are my core of my Heart<svg class="text-emoji" role="img" aria-label="💖"><use href="#heart"/></svg></span><time class="time">11:43 AM</time><svg class="ticks" role="img" aria-label="Read"><use href="#ticks"/></svg></li>
    <li class="bubble bubble--in bubble--first"><span class="text">huNn</span><time class="time">11:45 AM</time></li>
    <li class="bubble bubble--in"><span class="text">KaHe nAiiii</span><time class="time">11:45 AM</time></li>
    <li class="bubble bubble--in"><span class="text">jhUtHa</span><time class="time">11:45 AM</time></li>
  </ol>
  <span class="thumb"></span>
  <button class="jump" type="button" aria-label="Scroll to latest"><svg class="icon" width="28" height="28" viewBox="0 0 84 84"><path d="M42 6V75M8 43L42 76L76 43"/></svg></button>
</main>

<footer class="composer">
  <button class="tool" type="button" aria-label="Emoji"><svg class="icon icon--bold" width="28" height="28" viewBox="0 0 84 84"><circle cx="42" cy="42" r="35"/><path d="M28 51Q42 66 56 51"/><circle class="dot" cx="30" cy="34" r="5"/><circle class="dot" cx="54" cy="34" r="5"/></svg></button>
  <button class="tool" type="button" aria-label="Attach"><svg class="icon icon--bold" width="28" height="28" viewBox="213 555 84 84"><path d="M225 598L254 571Q264 562 275 568Q287 577 279 590L247 624Q238 632 231 625Q226 618 232 610L259 582Q264 579 267 583Q270 587 266 591L242 615"/></svg></button>
  <input class="field" type="text" placeholder="Type a message" aria-label="Type a message">
  <button class="tool" type="button" aria-label="Voice message"><svg class="icon icon--bold" width="28" height="28" viewBox="0 0 84 84"><rect x="29" y="7" width="26" height="46" rx="13"/><path d="M18 39V42Q20 64 42 65Q64 64 66 42V39M42 65V76"/></svg></button>
</footer>
</body>
</html>
```
FILE: styles.css
```css
* {
  box-sizing: border-box;
}

body {
  margin: 0;
  height: 100vh;
  display: flex;
  flex-direction: column;
  overflow: hidden;
  background: #2b2b2b;
  color: #f2f2f2;
  font-family: "Open Sans", "Noto Sans", sans-serif;
  font-size: 20px;
  line-height: 28px;
}

h1,
p,
blockquote,
ol {
  margin: 0;
  padding: 0;
}

button,
input {
  padding: 0;
  border: 0;
  background: none;
  color: inherit;
  font: inherit;
}

button {
  display: flex;
  align-items: center;
  justify-content: center;
}

.defs {
  position: absolute;
  width: 0;
  height: 0;
}

.icon {
  fill: none;
  stroke: #f2f2f2;
  stroke-width: 5;
  stroke-linejoin: round;
}

.icon--bold {
  stroke-linecap: round;
}

.dot {
  fill: #f2f2f2;
  stroke: none;
}

/* Top bar */
.topbar {
  flex: none;
  display: flex;
  align-items: center;
  height: 99px;
  padding: 0 26px 0 8px;
  border-top: 1px solid #1f1f1f;
  border-bottom: 2px solid #212121;
}

.avatar {
  width: 58px;
  height: 58px;
  margin-right: 19px;
}

.contact {
  flex: 1;
}

.contact-name {
  display: flex;
  align-items: center;
  gap: 6px;
  font-size: 20px;
  line-height: 29px;
  font-weight: 600;
  color: #fff;
}

.name-emoji {
  width: 25px;
  height: 25px;
}

.contact-status {
  color: #b8b8b8;
}

.calls {
  display: flex;
  align-items: center;
  height: 60px;
  margin-right: 22px;
  border: 1px solid #393939;
  border-radius: 7px;
  background: #333;
}

.call {
  width: 71px;
  height: 36px;
  padding-bottom: 4px;
}

.call + .call {
  border-left: 1px solid #3d3d3d;
}

/* Conversation */
.chat {
  position: relative;
  flex: 1;
  min-height: 0;
  overflow: hidden;
}

.wallpaper {
  position: absolute;
  inset: 0;
  width: 100%;
  height: 100%;
  fill: none;
  stroke: #383838;
  stroke-width: 4;
  stroke-linejoin: round;
  stroke-linecap: round;
}

.solid {
  fill: #2b2b2b;
}

.doodle-text {
  font-family: "Open Sans", sans-serif;
  font-weight: 700;
  stroke-width: 1;
}

.doodle-text--thin {
  font-weight: 400;
  fill: #383838;
  stroke: none;
}

.messages {
  position: relative;
  height: 100%;
  display: flex;
  flex-direction: column;
  justify-content: flex-end;
  gap: 5px;
  padding: 0 38px 1px 26px;
  list-style: none;
}

.bubble {
  position: relative;
  flex: none;
  display: flex;
  align-items: flex-end;
  min-height: 45px;
  padding: 8px 7px 4px 12px;
  border-radius: 8px;
  box-shadow: 0 1px 2px rgba(0, 0, 0, 0.25);
}

.text {
  flex: 1;
  padding-bottom: 4px;
}

.time {
  font-size: 14px;
  line-height: 22px;
}

.bubble--in {
  align-self: flex-start;
  background: #343434;
  border-top: 1px solid #3c3c3c;
}

.bubble--in .text {
  margin-right: 35px;
}

.bubble--in .time {
  color: #979797;
}

.bubble--out {
  align-self: flex-end;
  margin-top: -1px;
  padding-right: 11px;
  padding-bottom: 5px;
  background: #005c4b;
  border-top: 1px solid #126a59;
  color: #f5f8f7;
}

.bubble--out .text {
  margin-right: 31px;
}

.bubble--out .time {
  color: #79aba2;
}

.bubble--cut {
  width: 238px;
}

.bubble--first {
  margin-top: 12px;
}

.bubble--out.bubble--first {
  margin-top: 13px;
}

.bubble--first::before {
  content: "";
  position: absolute;
  top: -1px;
  width: 10px;
  height: 12px;
  background: inherit;
}

.bubble--in.bubble--first {
  border-top-left-radius: 0;
}

.bubble--in.bubble--first::before {
  right: 100%;
  clip-path: polygon(0 0, 100% 0, 100% 100%);
}

.bubble--out.bubble--first {
  border-top-right-radius: 0;
}

.bubble--out.bubble--first::before {
  left: 100%;
  clip-path: polygon(0 0, 100% 0, 0 100%);
}

.bubble--emoji {
  flex-direction: column;
  gap: 4px;
  padding: 11px 7px 2px 37px;
}

.emojis {
  display: flex;
  margin-right: 29px;
}

.emoji-md {
  width: 42px;
  height: 42px;
}

.emoji-lg {
  width: 63px;
  height: 63px;
}

.ticks {
  width: 18px;
  height: 12px;
  margin: 0 0 5px 8px;
}

.bubble--reply {
  flex-direction: column;
  align-items: stretch;
  padding-top: 12px;
}

.line {
  display: flex;
  align-items: flex-end;
}

.quote {
  height: 66px;
  margin-bottom: 8px;
  padding: 7px 9px;
  border-left: 6px solid #53bdeb;
  border-radius: 6px;
  background: #1d6b5b;
  font-size: 16px;
  line-height: 23px;
}

.quote-name {
  display: flex;
  align-items: center;
  gap: 4px;
  color: #53bdeb;
  font-weight: 600;
}

.quote-emoji {
  width: 20px;
  height: 20px;
}

.quote-text {
  color: #bdd3ce;
  font-size: 17px;
}

.text-emoji {
  width: 24px;
  height: 22px;
  vertical-align: -3px;
}

.thumb {
  position: absolute;
  right: 4px;
  top: 416px;
  width: 3px;
  height: 35px;
  border-radius: 2px;
  background: #9a9a9a;
}

.jump {
  position: absolute;
  right: 26px;
  bottom: 27px;
  width: 60px;
  height: 63px;
  padding-bottom: 4px;
  border-radius: 8px;
  background: #292929;
  box-shadow: 0 2px 8px rgba(0, 0, 0, 0.25);
}

/* Message box */
.composer {
  flex: none;
  display: flex;
  align-items: center;
  height: 70px;
  padding: 0 26px 0 5px;
  border-top: 2px solid #212121;
  border-bottom: 2px solid #231f23;
}

.tool {
  width: 28px;
  height: 40px;
  padding-top: 4px;
}

.tool + .tool {
  margin-left: 38px;
}

.field {
  flex: 1;
  min-width: 0;
  height: 44px;
  margin-left: 41px;
  outline: none;
}

.field::placeholder {
  color: #c4c4c4;
  opacity: 1;
}
```
